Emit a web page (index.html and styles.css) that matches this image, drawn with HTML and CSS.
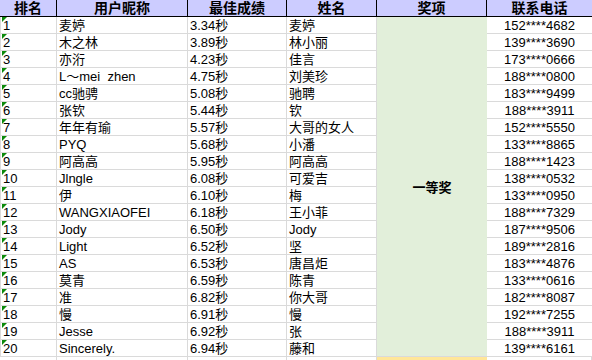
FILE: index.html
```html
<!DOCTYPE html>
<html lang="zh-CN">
<head>
<meta charset="utf-8">
<title>排名</title>
<link rel="stylesheet" href="styles.css">
</head>
<body>
<div class="sheet">
  <div class="hd">排名</div>
  <div class="hd">用户昵称</div>
  <div class="hd">最佳成绩</div>
  <div class="hd">姓名</div>
  <div class="hd">奖项</div>
  <div class="hd last">联系电话</div>

  <div class="c rank">1</div><div class="c">麦婷</div><div class="c">3.34秒</div><div class="c">麦婷</div>
  <div class="award">一等奖</div>
  <div class="c tel">152****4682</div>

  <div class="c rank">2</div><div class="c">木之林</div><div class="c">3.89秒</div><div class="c">林小丽</div><div class="c tel">139****3690</div>
  <div class="c rank">3</div><div class="c">亦洐</div><div class="c">4.23秒</div><div class="c">佳言</div><div class="c tel">173****0666</div>
  <div class="c rank">4</div><div class="c">L～mei&nbsp;&nbsp;zhen</div><div class="c">4.75秒</div><div class="c">刘美珍</div><div class="c tel">188****0800</div>
  <div class="c rank">5</div><div class="c">cc驰骋</div><div class="c">5.08秒</div><div class="c">驰聘</div><div class="c tel">183****9499</div>
  <div class="c rank">6</div><div class="c">张钦</div><div class="c">5.44秒</div><div class="c">钦</div><div class="c tel">188****3911</div>
  <div class="c rank">7</div><div class="c">年年有瑜</div><div class="c">5.57秒</div><div class="c">大哥的女人</div><div class="c tel">152****5550</div>
  <div class="c rank">8</div><div class="c">PYQ</div><div class="c">5.68秒</div><div class="c">小潘</div><div class="c tel">133****8865</div>
  <div class="c rank">9</div><div class="c">阿高高</div><div class="c">5.95秒</div><div class="c">阿高高</div><div class="c tel">188****1423</div>
  <div class="c rank">10</div><div class="c">Jlngle</div><div class="c">6.08秒</div><div class="c">可爱吉</div><div class="c tel">138****0532</div>
  <div class="c rank">11</div><div class="c">伊</div><div class="c">6.10秒</div><div class="c">梅</div><div class="c tel">133****0950</div>
  <div class="c rank">12</div><div class="c">WANGXIAOFEI</div><div class="c">6.18秒</div><div class="c">王小菲</div><div class="c tel">188****7329</div>
  <div class="c rank">13</div><div class="c">Jody</div><div class="c">6.50秒</div><div class="c">Jody</div><div class="c tel">187****9506</div>
  <div class="c rank">14</div><div class="c">Light</div><div class="c">6.52秒</div><div class="c">坚</div><div class="c tel">189****2816</div>
  <div class="c rank">15</div><div class="c">AS</div><div class="c">6.53秒</div><div class="c">唐昌炬</div><div class="c tel">183****4876</div>
  <div class="c rank">16</div><div class="c">莫青</div><div class="c">6.59秒</div><div class="c">陈青</div><div class="c tel">133****0616</div>
  <div class="c rank">17</div><div class="c">准</div><div class="c">6.82秒</div><div class="c">你大哥</div><div class="c tel">182****8087</div>
  <div class="c rank">18</div><div class="c">慢</div><div class="c">6.91秒</div><div class="c">慢</div><div class="c tel">192****7255</div>
  <div class="c rank">19</div><div class="c">Jesse</div><div class="c">6.92秒</div><div class="c">张</div><div class="c tel">188****3911</div>
  <div class="c rank">20</div><div class="c">Sincerely.</div><div class="c">6.94秒</div><div class="c">藤和</div><div class="c tel">139****6161</div>

  <div class="c"></div><div class="c"></div><div class="c"></div><div class="c"></div><div class="c yellow"></div><div class="c"></div>
</div>
</body>
</html>
```

FILE: styles.css
```css
html, body {
  margin: 0;
  padding: 0;
  background: #ffffff;
}

.sheet {
  display: grid;
  grid-template-columns: 57px 131px 99px 90px 110px 105px;
  grid-template-rows: 17px repeat(21, 17px);
  width: 592px;
  height: 360px;
  font-family: "Liberation Sans", "Noto Sans CJK SC", sans-serif;
  font-size: 13px;
  color: #000000;
  overflow: hidden;
}

.hd {
  box-sizing: border-box;
  background: #ccccff;
  border-right: 1px solid #000000;
  border-bottom: 1px solid #000000;
  font-family: "Liberation Sans", "Noto Sans CJK SC", sans-serif;
  font-weight: 700;
  font-size: 14px;
  line-height: 16px;
  text-align: center;
  white-space: nowrap;
}

.hd.last {
  border-right: none;
}

.c {
  box-sizing: border-box;
  position: relative;
  border-right: 1px solid #dadada;
  border-bottom: 1px solid #dadada;
  padding: 2px 0 0 2px;
  line-height: 14px;
  height: 17px;
  white-space: nowrap;
}

.rank {
  border-left: 1px solid #dadada;
  padding-left: 2px;
}

.rank::before {
  content: "";
  position: absolute;
  left: 1px;
  top: 0;
  width: 0;
  height: 0;
  border-top: 5px solid #0b8a0b;
  border-right: 5px solid transparent;
}

.tel {
  text-align: center;
  padding-left: 0;
  border-right: none;
}

.award {
  grid-row: 2 / span 20;
  grid-column: 5;
  box-sizing: border-box;
  background: #e2efda;
  border-bottom: 1px solid #dadada;
  display: flex;
  align-items: center;
  justify-content: center;
  font-family: "Liberation Sans", "Noto Sans CJK SC", sans-serif;
  font-weight: 700;
  font-size: 13px;
}

.yellow {
  background: #ffe699;
  border-right: none;
}
```
